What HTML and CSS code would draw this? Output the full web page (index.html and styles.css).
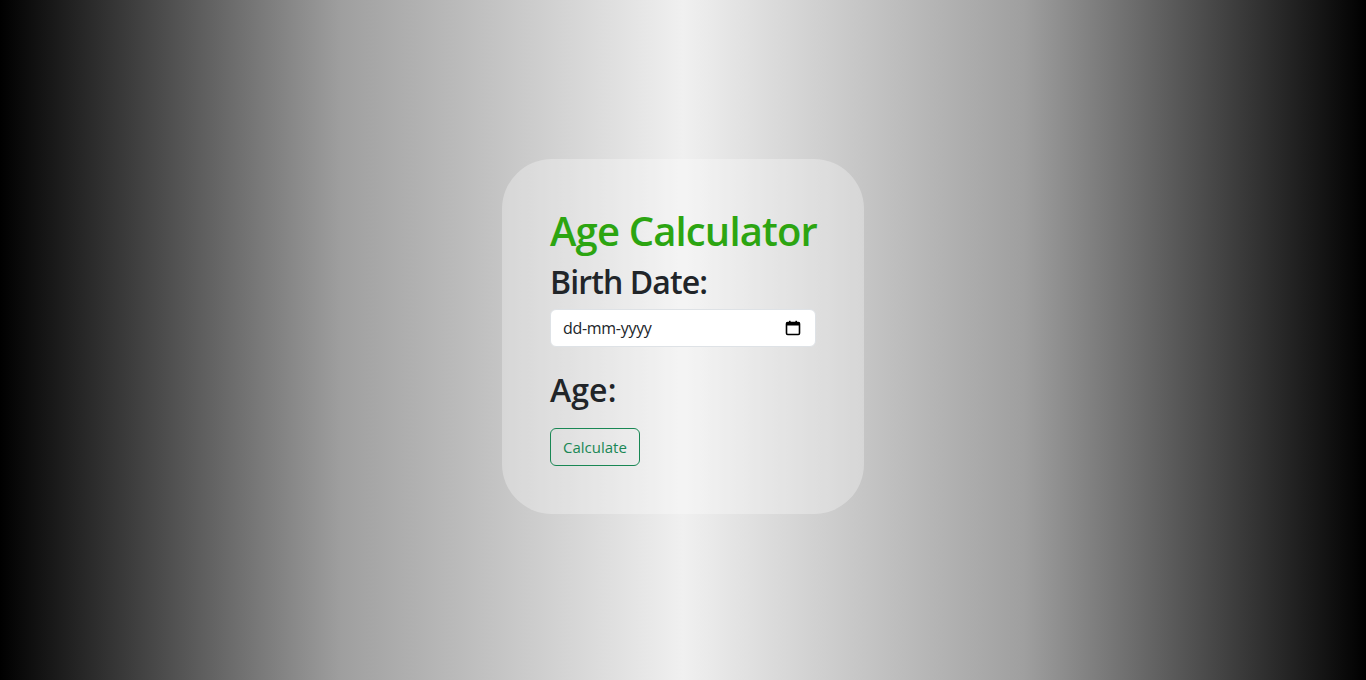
FILE: index.html
```html
<!DOCTYPE html>
<html lang="en">
<head>
<meta charset="utf-8">
<title>Age Calculator</title>
<link rel="stylesheet" href="styles.css">
</head>
<body>
<main class="page">
  <section class="card">
    <h1 class="title">Age Calculator</h1>
    <h2 class="label">Birth Date:</h2>
    <div class="date-input">
      <span class="date-text">dd-mm-yyyy</span>
      <svg class="cal-icon" width="16" height="16" viewBox="0 0 16 16" aria-hidden="true">
        <rect x="1.5" y="2.5" width="13" height="12" rx="1.2" fill="none" stroke="#000" stroke-width="1.6"/>
        <rect x="1.5" y="2.5" width="13" height="3" fill="#000"/>
        <rect x="4" y="0.8" width="1.6" height="3" fill="#000"/>
        <rect x="10.4" y="0.8" width="1.6" height="3" fill="#000"/>
      </svg>
    </div>
    <h2 class="label age">Age:</h2>
    <button class="btn" type="button">Calculate</button>
  </section>
</main>
</body>
</html>
```
FILE: styles.css
```css
html, body {
  margin: 0;
  padding: 0;
}
body {
  background: linear-gradient(to right, #000 0%, #9f9f9f 25%, #f0f0f0 50%, #9f9f9f 75%, #000 100%);
  font-family: "Open Sans", "Noto Sans", sans-serif;
  color: #212529;
}
.page {
  min-height: 100vh;
  display: flex;
  align-items: center;
  justify-content: center;
  box-sizing: border-box;
  padding-bottom: 8px;
}
.card {
  width: 362px;
  box-sizing: border-box;
  padding: 48px;
  border-radius: 50px;
  background: rgba(255, 255, 255, 0.3);
  display: flex;
  flex-direction: column;
  align-items: flex-start;
}
.title {
  margin: 0 0 8px;
  font-size: 40px;
  line-height: 48px;
  font-weight: 600;
  color: #2ca511;
  letter-spacing: -0.85px;
  white-space: nowrap;
}
.label {
  margin: 0 0 8px;
  font-size: 32px;
  line-height: 38px;
  font-weight: 600;
  color: #212529;
  letter-spacing: -0.9px;
}
.label.age {
  margin-top: 24px;
  margin-bottom: 19px;
  letter-spacing: 0.1px;
}
.date-input {
  width: 266px;
  height: 38px;
  box-sizing: border-box;
  display: flex;
  align-items: center;
  justify-content: space-between;
  padding: 0 14px 0 12px;
  background: #fff;
  border: 1px solid #dee2e6;
  border-radius: 6px;
  font-size: 16px;
  color: #212529;
}
.date-text {
  letter-spacing: -0.3px;
}
.cal-icon {
  display: block;
}
.btn {
  height: 38px;
  padding: 0 12px;
  font-family: inherit;
  font-size: 15px;
  color: #198754;
  background: transparent;
  border: 1px solid #198754;
  border-radius: 6px;
  letter-spacing: 0;
}
```
